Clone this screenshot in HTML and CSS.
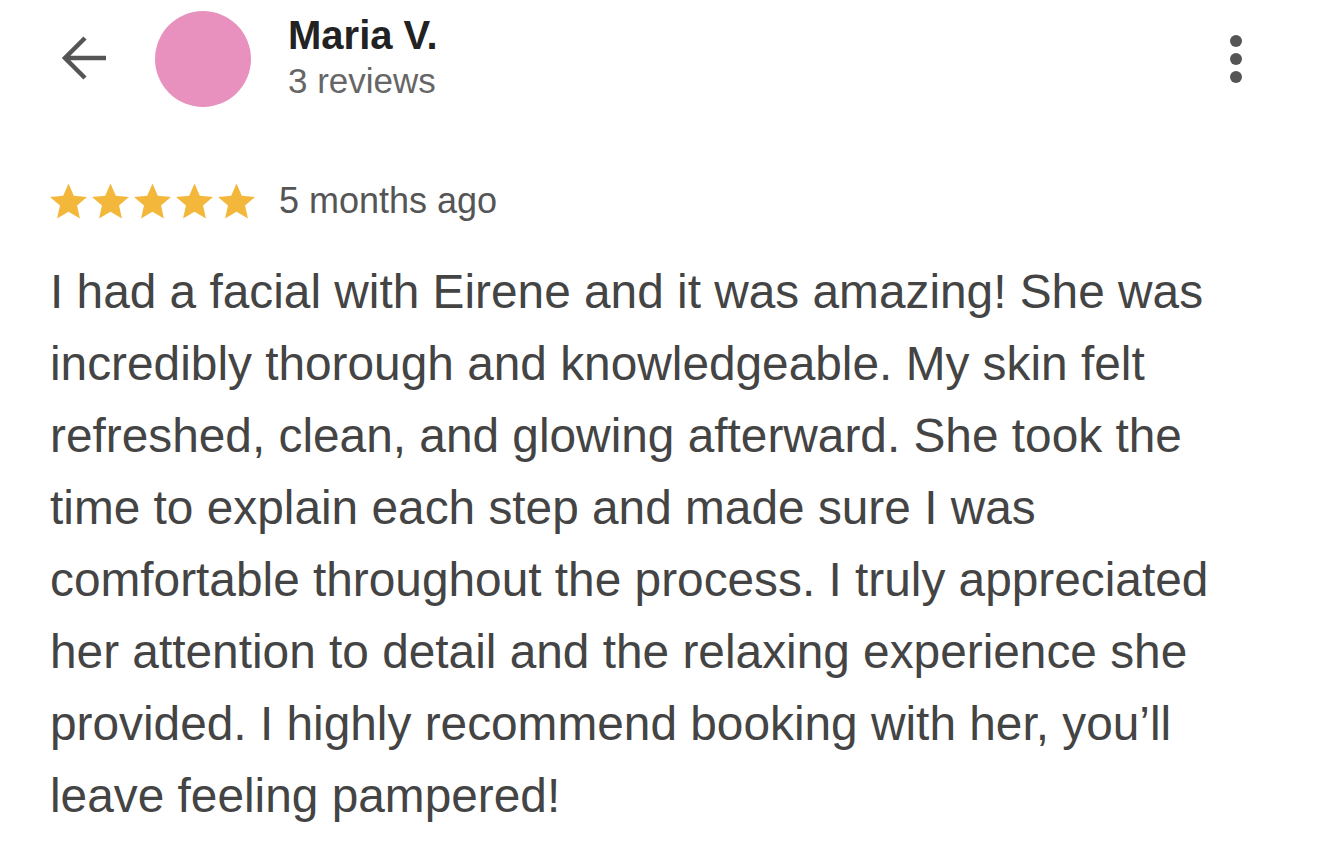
FILE: index.html
```html
<!DOCTYPE html>
<html>
<head>
<meta charset="utf-8">
<link rel="stylesheet" href="styles.css">
</head>
<body>
<div class="page">
  <header class="top">
    <div class="back">
      <svg width="48" height="48" viewBox="0 0 48 48"><path d="M46 24H5M25 4L5 24l20 20" fill="none" stroke="#555" stroke-width="4.5"/></svg>
    </div>
    <div class="avatar"></div>
    <div class="who">
      <div class="name">Maria V.</div>
      <div class="count">3 reviews</div>
    </div>
    <div class="more">
      <span class="dot"></span><span class="dot"></span><span class="dot"></span>
    </div>
  </header>
  <div class="meta">
    <div class="stars">
      <svg viewBox="0 0 24 24"><path d="M12 1.5l3.1 7.1 7.7.7-5.8 5.1 1.7 7.6L12 18l-6.7 4 1.7-7.6-5.8-5.1 7.7-.7z" fill="#f3b83b"/></svg>
      <svg viewBox="0 0 24 24"><path d="M12 1.5l3.1 7.1 7.7.7-5.8 5.1 1.7 7.6L12 18l-6.7 4 1.7-7.6-5.8-5.1 7.7-.7z" fill="#f3b83b"/></svg>
      <svg viewBox="0 0 24 24"><path d="M12 1.5l3.1 7.1 7.7.7-5.8 5.1 1.7 7.6L12 18l-6.7 4 1.7-7.6-5.8-5.1 7.7-.7z" fill="#f3b83b"/></svg>
      <svg viewBox="0 0 24 24"><path d="M12 1.5l3.1 7.1 7.7.7-5.8 5.1 1.7 7.6L12 18l-6.7 4 1.7-7.6-5.8-5.1 7.7-.7z" fill="#f3b83b"/></svg>
      <svg viewBox="0 0 24 24"><path d="M12 1.5l3.1 7.1 7.7.7-5.8 5.1 1.7 7.6L12 18l-6.7 4 1.7-7.6-5.8-5.1 7.7-.7z" fill="#f3b83b"/></svg>
    </div>
    <span class="ago">5 months ago</span>
  </div>
  <p class="text">I had a facial with Eirene and it was amazing! She was<br>
incredibly thorough and knowledgeable. My skin felt<br>
refreshed, clean, and glowing afterward. She took the<br>
time to explain each step and made sure I was<br>
comfortable throughout the process. I truly appreciated<br>
her attention to detail and the relaxing experience she<br>
provided. I highly recommend booking with her, you’ll<br>
leave feeling pampered!</p>
</div>
</body>
</html>
```
FILE: styles.css
```css
html, body {
  margin: 0;
  padding: 0;
  background: #fff;
}
body {
  font-family: "Liberation Sans", Arial, sans-serif;
  width: 1320px;
  height: 865px;
  overflow: hidden;
}
.page {
  padding: 0 0 0 48px;
}
.top {
  display: flex;
  align-items: center;
  height: 118px;
}
.back {
  width: 48px;
  height: 48px;
  margin-left: 12px;
  margin-top: -2px;
}
.back svg { display: block; }
.avatar {
  width: 96px;
  height: 96px;
  border-radius: 50%;
  background: #e891bf;
  margin-left: 47px;
  margin-top: -1px;
}
.who {
  margin-left: 37px;
  margin-top: -2px;
  display: flex;
  flex-direction: column;
}
.name {
  font-weight: bold;
  font-size: 40px;
  color: #222;
  line-height: 46px;
}
.count {
  font-size: 35px;
  color: #666;
  line-height: 46px;
}
.more {
  margin-left: auto;
  margin-right: 78px;
  display: flex;
  flex-direction: column;
  gap: 6px;
  margin-top: -1px;
}
.dot {
  width: 12px;
  height: 12px;
  border-radius: 50%;
  background: #555;
}
.meta {
  display: flex;
  align-items: center;
  margin-top: 62px;
  height: 42px;
}
.stars {
  display: flex;
  gap: 1px;
}
.stars svg {
  width: 41px;
  height: 41px;
  display: block;
}
.ago {
  margin-left: 22px;
  font-size: 36px;
  color: #555;
}
.text {
  margin: 34px 0 0 2px;
  width: 1260px;
  font-size: 47.8px;
  line-height: 72px;
  color: #444;
  white-space: nowrap;
}
```
